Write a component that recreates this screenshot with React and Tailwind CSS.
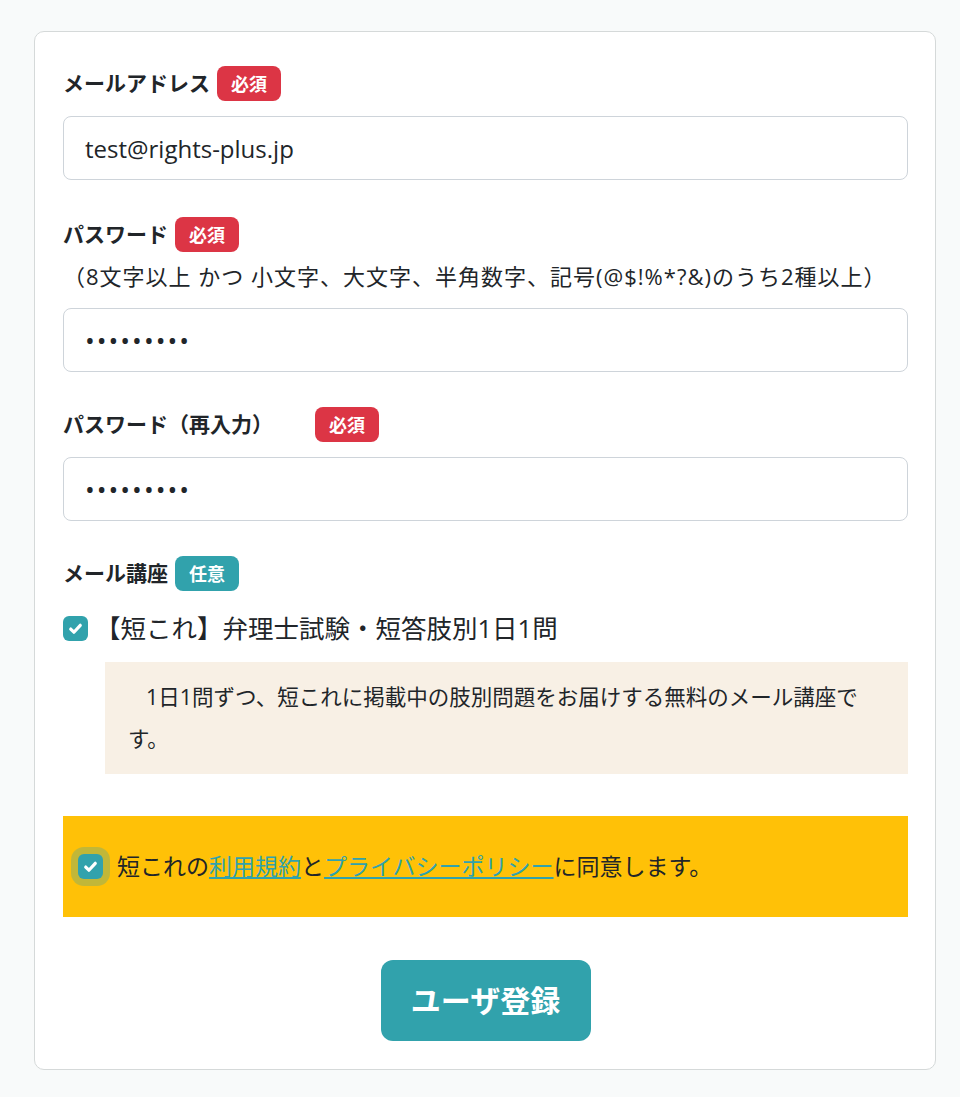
import React from 'react';

const Badge = ({ children, tone = 'red', className = '' }) => (
  <span
    className={`inline-flex items-center rounded-lg px-[14px] h-[35px] text-[18px] font-bold text-white leading-none ${
      tone === 'red' ? 'bg-[#dc3545]' : 'bg-[#31a2ac]'
    } ${className}`}
  >
    {children}
  </span>
);

const CheckBox = ({ ring = false }) => (
  <span
    className={`inline-flex items-center justify-center shrink-0 w-[25px] h-[25px] rounded-[6px] bg-[#31a2ac] ${
      ring ? 'shadow-[0_0_0_7px_rgba(49,162,172,0.3)]' : ''
    }`}
  >
    <svg width="17" height="17" viewBox="0 0 16 16" fill="none">
      <path d="M3.5 8.5l3 3L12.5 5" stroke="#fff" strokeWidth="3" strokeLinecap="round" strokeLinejoin="round" />
    </svg>
  </span>
);

const Label = ({ children }) => (
  <div className="flex items-center gap-[7px] h-[35px] text-[21px] font-bold text-[#212529]">{children}</div>
);

const Input = ({ value, type = 'text' }) => (
  <input
    type={type}
    readOnly
    value={value}
    className={`w-full h-[64px] rounded-lg border border-[#ced4da] bg-white px-[21px] text-[#212529] outline-none ${
      type === 'password' ? 'text-[26px] tracking-[2px]' : 'text-[24px]'
    }`}
  />
);

export default function App() {
  return (
    <div
      className="min-h-[1097px] bg-[#f8fafa] pt-[31px] pl-[34px] pr-[24px] pb-[29px]"
      style={{ fontFamily: '"Open Sans", "Noto Sans CJK JP", sans-serif' }}
    >
      <div className="rounded-[10px] border border-[#d5d9d9] bg-white pl-[28px] pr-[27px] pt-[34px] pb-[28px]">
        <Label>
          メールアドレス<Badge>必須</Badge>
        </Label>
        <div className="mt-[15px]">
          <Input value="test@rights-plus.jp" />
        </div>

        <div className="mt-[37px]">
          <Label>
            パスワード<Badge>必須</Badge>
          </Label>
          <p className="mt-[6px] text-[22px] tracking-[1px] text-[#212529] leading-[36px]">
            （8文字以上 かつ 小文字、大文字、半角数字、記号(@$!%*?&)のうち2種以上）
          </p>
        </div>
        <div className="mt-[14px]">
          <Input type="password" value="123456789" />
        </div>

        <div className="mt-[35px]">
          <Label>
            パスワード（再入力）<Badge className="ml-[35px]">必須</Badge>
          </Label>
        </div>
        <div className="mt-[15px]">
          <Input type="password" value="123456789" />
        </div>

        <div className="mt-[35px]">
          <Label>
            メール講座<Badge tone="teal">任意</Badge>
          </Label>
        </div>
        <div className="mt-[19px] flex items-center gap-[7px] h-[36px] text-[25.5px] text-[#212529]">
          <CheckBox />
          <span>【短これ】弁理士試験・短答肢別1日1問</span>
        </div>
        <div className="mt-[16px] ml-[42px] bg-[#f8f0e5] pl-[23px] pr-[36px] py-[14px] text-[21.5px] leading-[42px] text-[#212529] indent-[18px]">
          1日1問ずつ、短これに掲載中の肢別問題をお届けする無料のメール講座です。
        </div>

        <div className="mt-[42px] flex items-center gap-[14px] bg-[#ffc107] h-[101px] pl-[15px] text-[23px] text-[#212529]">
          <CheckBox ring />
          <span>
            短これの
            <a href="#" className="text-[#31a2ac] underline">利用規約</a>
            と
            <a href="#" className="text-[#31a2ac] underline">プライバシーポリシー</a>
            に同意します。
          </span>
        </div>

        <div className="mt-[43px] flex justify-center">
          <button className="h-[81px] w-[210px] rounded-xl bg-[#31a2ac] text-[30px] font-bold text-white">
            ユーザ登録
          </button>
        </div>
      </div>
    </div>
  );
}
